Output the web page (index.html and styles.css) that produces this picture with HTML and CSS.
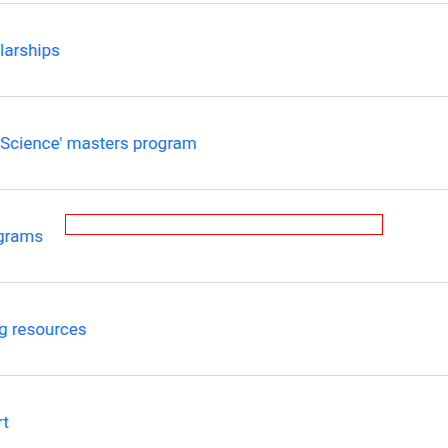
FILE: index.html
```html
<!DOCTYPE html>
<html>
<head>
<meta charset="utf-8">
<link rel="stylesheet" href="styles.css">
</head>
<body>
<div class="page">
  <ul class="list">
    <li class="row"><span class="link">larships</span></li>
    <li class="row"><span class="link">Science' masters program</span></li>
    <li class="row"><span class="link cut-g">grams</span></li>
    <li class="row"><span class="link cut-res">g resources</span></li>
    <li class="row"><span class="link cut-r">rt</span></li>
  </ul>
  <div class="highlight"></div>
</div>
</body>
</html>
```
FILE: styles.css
```css
html, body {
  margin: 0;
  padding: 0;
  background: #ffffff;
}
.page {
  position: relative;
  width: 448px;
  height: 448px;
  overflow: hidden;
  font-family: Roboto, "Noto Sans", sans-serif;
}
.list {
  list-style: none;
  margin: 0;
  padding: 3px 0 0 0;
}
.row {
  display: flex;
  align-items: center;
  height: 92px;
  border-top: 1px solid #dadce0;
}
.link {
  color: #1a73e8;
  font-size: 17px;
  line-height: 24px;
  white-space: nowrap;
}
.cut-g {
  margin-left: -5px;
}
.cut-res {
  margin-left: -2px;
}
.cut-r {
  margin-left: -3px;
}
.highlight {
  position: absolute;
  left: 65px;
  top: 214px;
  width: 316px;
  height: 19px;
  border: 1px solid #ff0000;
}
```
